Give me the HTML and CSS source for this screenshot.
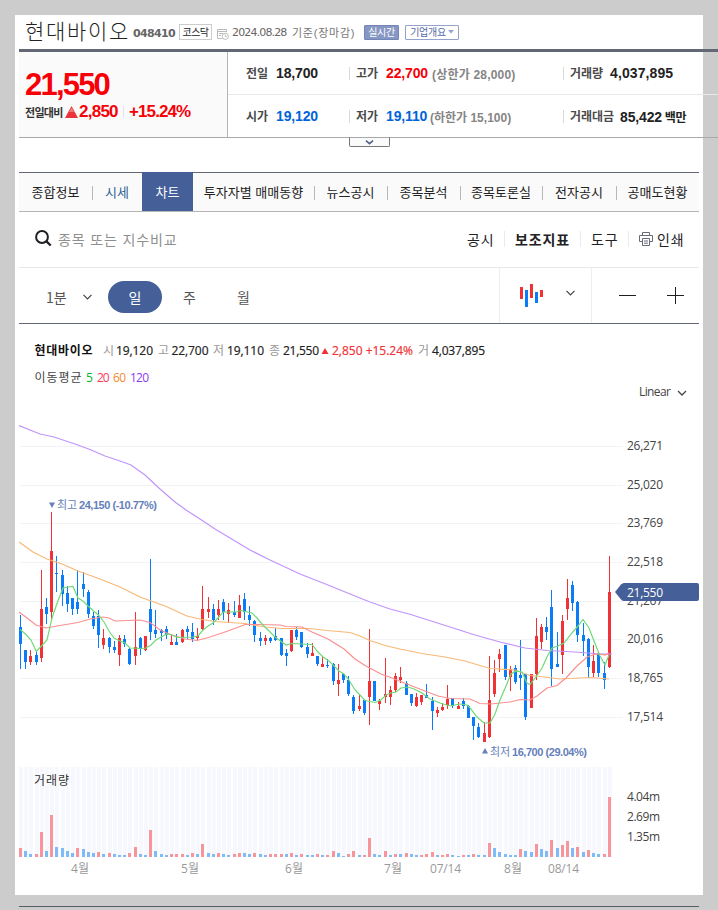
FILE: index.html
```html
<!DOCTYPE html>
<html lang="ko">
<head>
    <meta charset="UTF-8">
    <meta name="viewport" content="width=device-width, initial-scale=1.0">
    <title>현대바이오</title>
    <link rel="stylesheet" href="styles.css">
</head>
<body>
    <div id="panel">
        <div id="header">
            <h1>현대바이오</h1>
            <span class="code">048410</span>
            <span class="market">코스닥</span>
            <svg class="date-icon" width="12" height="12" viewBox="0 0 12 12" fill="none" stroke="#bbb">
                <path d="M5 10.5H.5v-9h9V4M.5 3.5h9M2 5.5h4M2 7.5h2"/>
                <circle cx="8.3" cy="8.3" r="3.1"/>
                <path d="M8.3 6.5v2h1.5"/>
            </svg>
            <span class="date">2024.08.28</span>
            <span class="basis">기준(장마감)</span>
            <span class="live">실시간</span>
            <span class="summary">기업개요<svg width="6" height="4" viewBox="0 0 6 4"><path d="M0 0h6L3 3.5z" fill="#94a3cf"/></svg></span>
        </div>

        <div id="quote">
            <div class="today">
                <strong class="price">21,550</strong>
                <div class="change">
                    <span class="label">전일대비</span>
                    <svg width="13" height="12" viewBox="0 0 13 12"><path d="M6.5 0L13 12H0z" fill="#e8343a"/><path d="M6.5 1.5L9 6H4z" fill="#f6777a"/></svg>
                    <span class="diff">2,850</span>
                    <span class="percent">+15.24%</span>
                </div>
            </div>
            <div class="rows">
                <div class="row">
                    <span class="name">전일</span><b>18,700</b>
                    <span class="name bar">고가</span><b class="up">22,700</b><span class="limit">(상한가 28,000)</span>
                    <span class="name bar">거래량</span><b class="volume">4,037,895</b>
                </div>
                <div class="row">
                    <span class="name">시가</span><b class="down">19,120</b>
                    <span class="name bar">저가</span><b class="down">19,110</b><span class="limit low">(하한가 15,100)</span>
                    <span class="name bar">거래대금</span><b class="amount">85,422 <i>백만</i></b>
                </div>
            </div>
            <div class="more"><svg width="9" height="5" viewBox="0 0 9 5" fill="none" stroke="#4f6285" stroke-width="1.6"><path d="M1 .7l3.500 3 3.500-3"/></svg></div>
        </div>

        <div id="tabs">
            <a class="line">종합정보</a>
            <a class="sise">시세</a>
            <a class="active">차트</a>
            <a class="line">투자자별 매매동향</a>
            <a class="line">뉴스공시</a>
            <a class="line">종목분석</a>
            <a class="line">종목토론실</a>
            <a class="line">전자공시</a>
            <a>공매도현황</a>
        </div>

        <div id="search">
            <svg width="17" height="17" viewBox="0 0 17 17" fill="none" stroke="#1e1e23" stroke-width="2"><circle cx="7" cy="7" r="5.900"/><path d="M11.200 11.200l4.500 4.300" stroke-width="2.300"/></svg>
            <span class="placeholder">종목 또는 지수비교</span>
            <span class="menu gongsi">공시</span>
            <span class="menu bold">보조지표</span>
            <span class="menu tool">도구</span>
            <span class="menu print"><svg width="14" height="14" viewBox="0 0 14 14" fill="none" stroke="#666b78"><path d="M3.500 3.500v-3h7v3M3.500 9.500h-3v-6h13v6h-3M3.500 6.500h7v7h-7zM5 9h4M5 11.200h4"/></svg>인쇄</span>
        </div>

        <div id="period">
            <span class="minute">1분<svg width="9" height="6" viewBox="0 0 9 6" fill="none" stroke="#444" stroke-width="1.200"><path d="M.5.8l4 4 4-4"/></svg></span>
            <span class="day">일</span>
            <span class="week">주</span>
            <span class="month">월</span>
            <span class="type">
                <svg width="24" height="24" viewBox="0 0 24 24">
                    <path d="M0 3h3v12H0zM10 0h3v14h-3zM20 6h3v7h-3z" fill="#f03236"/>
                    <path d="M5 6h3v17H5zM15 8h3v11h-3z" fill="#0a7cf8"/>
                </svg>
                <svg width="9" height="6" viewBox="0 0 9 6" fill="none" stroke="#444" stroke-width="1.200"><path d="M.5.8l4 4 4-4"/></svg>
            </span>
            <span class="scale">
                <svg width="17" height="17" viewBox="0 0 17 17" stroke="#1e1e23"><path d="M0 8.500h17"/></svg>
                <svg width="17" height="17" viewBox="0 0 17 17" stroke="#1e1e23"><path d="M0 8.500h17M8.500 0v17"/></svg>
            </span>
        </div>

        <svg id="chart" width="680" height="571" viewBox="19 324 680 571">
            <g class="legend">
                <text x="34.500" y="355" textLength="58" class="stock">현대바이오</text>
                <text x="103" y="355" class="gray">시</text><text x="116" y="355" textLength="37">19,120</text>
                <text x="158" y="355" class="gray">고</text><text x="171.500" y="355" textLength="37">22,700</text>
                <text x="213" y="355" class="gray">저</text><text x="227" y="355" textLength="37">19,110</text>
                <text x="269" y="355" class="gray">종</text><text x="283" y="355" textLength="36">21,550</text>
                <path d="M325 348l3.500 6h-7z" fill="#f03236"/>
                <text x="332" y="355" textLength="81" class="rise">2,850 +15.24%</text>
                <text x="418" y="355" class="gray">거</text><text x="432" y="355" textLength="53">4,037,895</text>
            </g>
            <g class="average">
                <text x="34.500" y="382" textLength="47">이동평균</text>
                <text x="86" y="382" fill="#00b92f">5</text>
                <text x="97" y="382" textLength="12.500" fill="#f9395c">20</text>
                <text x="113" y="382" textLength="13" fill="#f58a2c">60</text>
                <text x="130" y="382" textLength="19" fill="#8a3df5">120</text>
            </g>
            <text x="639" y="396" textLength="32" class="linear">Linear</text>
            <path d="M678 391l4 4 4-4" fill="none" stroke="#444" stroke-width="1.300"/>
            <g id="grid"></g>
            <g id="candles"></g>
            <g id="averages"></g>
            <g id="volumes"></g>
            <g class="note">
                <path d="M49 502.500h6l-3 5.500z"/>
                <text x="57" y="509" class="ko" textLength="20">최고</text><text x="79" y="509" textLength="78">24,150 (-10.77%)</text>
                <path d="M482 753.500h6l-3-5.500z"/>
                <text x="490" y="756" class="ko" textLength="20">최저</text><text x="512" y="756" textLength="75">16,700 (29.04%)</text>
            </g>
            <path d="M615 592l6-7.500q1.500-1.500 3-1.500h73q2 0 2 2v14q0 2-2 2h-73q-1.500 0-3-1.500z" fill="#455f99"/>
            <text x="627" y="597" textLength="36" class="current">21,550</text>
            <text x="34" y="785" textLength="35" class="volume-title">거래량</text>
        </svg>
    </div>
    <div id="footer-line"></div>

    <script>
        const NS = "http://www.w3.org/2000/svg";
        const first = 20.5, step = 5.21;

        // color, high, body top, body bottom, low, volume color, volume height
        const days = [
            "b 615 627 644 669 r 9", "b 650 650 662 669 b 6", "r 650 656 662 665 b 3", "b 651 655 662 665 r 3", "r 570 609 658 662 r 25",
            "b 598 607 614 624 b 6", "r 512 551 612 620 r 42", "b 556 573 574 592 b 10", "b 570 575 594 606 b 9", "b 586 593 604 612 b 6",
            "b 598 598 609 615 b 4", "b 570 602 609 614 r 9", "b 572 584 589 597 b 8", "b 590 592 614 618 b 5", "b 612 616 626 629 b 4",
            "b 610 616 635 648 r 5", "r 629 638 645 649 b 3", "b 637 638 647 653 r 4", "b 641 647 650 653 b 3", "r 635 638 655 666 b 2",
            "b 635 639 644 647 b 2", "b 647 649 664 665 r 4", "r 612 647 656 665 r 10", "b 637 638 649 655 b 3", "r 636 636 650 651 b 2",
            "b 559 609 632 640 r 27", "b 610 630 634 638 b 6", "b 629 630 633 641 b 3", "b 626 629 635 639 b 2", "r 634 642 645 645 r 3",
            "b 634 642 645 645 r 3", "r 629 630 642 643 r 3", "b 626 629 632 639 b 2", "b 623 632 639 642 r 4", "r 628 636 638 640 b 3",
            "r 586 609 629 631 r 13", "r 597 609 612 618 b 4", "b 604 609 620 625 b 3", "r 600 609 615 620 r 4", "b 599 602 612 620 b 3",
            "r 603 610 614 622 b 2", "b 601 612 615 617 r 3", "r 595 605 618 618 r 4", "b 593 599 612 620 b 4", "b 606 615 620 626 b 3",
            "b 620 621 635 642 r 4", "b 632 638 641 646 b 3", "r 635 638 641 645 b 2", "b 637 638 641 643 r 3", "b 628 636 640 641 r 3",
            "b 638 638 655 656 r 3", "b 649 653 656 666 b 3", "r 630 630 651 652 r 4", "b 627 630 637 640 b 2", "b 632 632 647 648 r 3",
            "b 643 647 654 658 b 2", "r 643 653 656 656 b 2", "b 656 656 664 666 r 3", "r 656 664 667 667 b 2", "b 659 665 666 668 r 2",
            "b 663 664 681 685 r 6", "r 664 680 684 696 b 4", "b 674 674 680 683 b 1", "b 676 680 694 696 r 3", "b 695 697 711 714 r 6",
            "r 695 706 709 711 b 2", "b 700 700 713 715 r 2", "r 629 681 697 725 r 19", "b 681 681 701 701 b 3", "r 699 701 704 710 b 2",
            "r 658 694 697 703 r 6", "r 686 690 697 705 b 2", "r 673 676 690 692 r 3", "r 667 677 680 683 b 3", "b 681 683 695 695 r 4",
            "b 694 694 703 706 b 3", "r 693 697 706 707 b 2", "r 695 695 702 705 r 2", "b 684 695 698 698 r 3", "b 697 701 711 730 r 5",
            "r 707 710 713 717 b 2", "r 703 707 710 711 r 2", "r 685 699 705 709 r 3", "b 698 698 706 708 b 2", "r 702 706 709 709 b 1",
            "b 698 701 706 709 r 2", "b 705 706 718 718 b 2", "b 717 717 726 740 r 3", "b 723 727 737 738 b 2", "r 722 733 742 742 b 2",
            "r 656 700 737 738 r 14", "r 660 673 694 697 b 9", "r 649 654 659 672 b 5", "b 645 645 677 680 b 3", "r 666 669 677 691 b 2",
            "b 665 668 682 684 b 2", "b 640 675 678 690 r 8", "b 674 674 717 720 b 6", "r 674 674 708 708 b 5", "r 618 636 674 680 r 13",
            "r 624 627 642 649 b 8", "b 617 627 632 640 b 6", "b 590 607 669 686 r 17", "b 632 664 667 667 b 9", "r 615 621 655 674 r 12",
            "r 579 598 609 620 r 16", "b 581 585 603 611 b 9", "b 601 602 635 642 r 10", "b 623 635 641 656 b 5", "b 638 639 667 678 r 7",
            "r 645 661 673 677 b 4", "b 653 653 673 677 b 3", "b 662 673 680 689 r 3", "r 556 592 667 668 r 60"
        ];

        const averages = [
            { color: "#c294fb", points: "19,425.5 40,434 54,437 75,444 90,449.5 105,456 120,461 131,465 145,475 160,489 175,502 186,510 200,519 215,529 235,541 250,550 270,560 300,574 328,585 350,594 370,602 390,609 409,614 428,620 450,627 475,635 500,642 525,648 547,650.5 575,652 600,654 612,654" },
            { color: "#f9b877", points: "19,542 33,552 47,559 62,564 78,571 100,579 120,587 140,597 165,606 187,616 202,619.5 215,621.5 245,623.5 265,627 282,628.5 310,628.5 327,630.5 350,632.5 360,636 370,640.5 385,645.5 400,649 422,653.5 445,657 465,661 490,668.5 515,670 530,675.5 545,677 560,679 590,677.5 609,679" },
            { color: "#fb8f8f", points: "19,612 27,618 36,625 46,628 57,626 78,622.5 90,619 103,617 109,618 115,621 140,620 150,622.5 160,630 172,635 185,639 197,640.5 210,637 228,631 245,624.5 256,624.5 280,625 286,626.5 302,627 312,632 328,639 344,649 355,659 365,665.5 381,674 392,678 402,682 412,686 425,691 438,696 450,698.5 470,699 480,703.5 491,704 500,703 510,702 520,699.5 530,700 537,696 547,688 557,685.5 566,678 576,667 587,657 594,654.5 600,654 605,655 609,653" },
            { color: "#70d977", points: "20,629.5 25.5,634 31,640 36.3,651.5 41.5,646 47,640 52,618 57.5,602 63,588 68,587 73,586.5 78,598 83,601 88,606 93,610.5 98.5,615 104,622 109,631 114,638 120,641 125,643 130,648 145,648.5 151,645 156,640 161,637 167,634 172,635 177,637.5 193,637 198,636 203,630 208,626 213,623 218,618 223,612 236,612 241,610.5 252,613 257,618 262,624 267,629 275,637 286,645 292,643.5 312,644.5 318,652 323,657 329,661 334,666 339,671 344,674 349,680 355,690 360,695 365,700.5 375,702.5 381,700 386,695 391,693 396,692 401,688 408,687 414,689 422,693 430,699 440,703 450,706 460,704 467,705 470,708 477,717 484,723 490,723 495,714 500,700 506,686 511,674 516,671 522,672 527,683 530,684.5 536,677 542,668 547,657 552,648 558,646 564,643 572,633 578,626 583,619.5 589,628 594,641 600,656 605,665 609,655" }
        ];

        function add(parent, tag, attrs, text) {
            let el = document.createElementNS(NS, tag);
            for (let key in attrs) el.setAttribute(key, attrs[key]);
            if (text) el.textContent = text;
            document.getElementById(parent).appendChild(el);
        }

        function rect(parent, x, y, width, height, fill) {
            add(parent, "rect", { x, y, width, height, fill });
        }

        // price lines with their labels
        [[446, "26,271"], [485, "25,020"], [523, "23,769"], [562, "22,518"], [601, "21,267"],
         [639, "20,016"], [678, "18,765"], [717, "17,514"]].forEach(([y, label]) => {
            rect("grid", 20, y, 603, 1, "#f1f3f6");
            add("grid", "text", { x: 627, y: y + 4, textLength: 36, class: "axis" }, label);
        });
        [[801, "4.04m"], [821, "2.69m"], [841, "1.35m"]].forEach(([y, label]) => {
            add("grid", "text", { x: 627, y, textLength: 33, class: "axis" }, label);
        });
        [[71, "4월", 18], [181, "5월", 18], [285, "6월", 18], [384, "7월", 18], [430, "07/14", 31],
         [504, "8월", 18], [548, "08/14", 31]].forEach(([x, label, textLength]) => {
            add("grid", "text", { x, y: 873, textLength, class: "month-label" }, label);
        });

        days.forEach((day, i) => {
            let [color, high, top, bottom, low, volumeColor, volume] = day.split(" ");
            let x = Math.floor(first + i * step);
            let fill = color === "r" ? "#f03236" : "#0a7cf8";
            rect("candles", x, high, 1, low - high, fill);
            rect("candles", x - 1, top, 3, bottom - top, fill);
            rect("volumes", x - 1, 767, 4, 90, "#f6f8fd");
            rect("volumes", x - 1, 857 - volume, 3, volume, volumeColor === "r" ? "#f6969b" : "#80bbf9");
        });

        averages.forEach(line => {
            add("averages", "polyline", { points: line.points, stroke: line.color });
        });
    </script>
</body>
</html>
```
FILE: styles.css
```css
* {
    box-sizing: border-box;
}
body {
    margin: 0;
    padding-top: 15px;
    height: 910px;
    overflow: hidden;
    background: #ccc;
    font-family: "Liberation Sans", "Noto Sans CJK KR", sans-serif;
    color: #222;
}
#panel {
    width: 688px;
    height: 880px;
    margin-left: 15px;
    padding-left: 4px;
    background: #fff;
}
#header {
    display: flex;
    align-items: center;
    height: 34px;
    padding-left: 6px;
    white-space: nowrap;
    font-size: 12px;
}
h1 {
    width: 108px;
    height: 34px;
    margin: 0;
    font-family: "Noto Sans CJK KR", sans-serif;
    font-size: 21px;
    font-weight: 300;
    letter-spacing: 1.7px;
    line-height: 30px;
}
.code {
    width: 46px;
    padding-top: 3px;
    font: bold 11px "DejaVu Sans", sans-serif;
    letter-spacing: -0.65px;
    color: #666;
}
.market {
    width: 33px;
    height: 16px;
    border: 1px solid #ccc;
    font-size: 10px;
    line-height: 15px;
    text-align: center;
    letter-spacing: -0.6px;
}
.date-icon {
    margin: 4px 3px 0 5px;
}
.date {
    width: 60px;
    font: 11px "DejaVu Sans", sans-serif;
    letter-spacing: -0.85px;
    color: #666;
}
.basis {
    width: 72px;
    font-size: 11px;
    letter-spacing: 0.75px;
    color: #777;
}
.live, .summary {
    height: 15px;
    border: 1px solid #7384b8;
    border-radius: 1px;
    font-size: 10px;
    line-height: 14px;
    letter-spacing: -0.3px;
    text-align: center;
}
.live {
    width: 35px;
    background: #8797c4;
    color: #fff;
}
.summary {
    width: 54px;
    margin-left: 6px;
    border-color: #93a2cc;
    color: #5569a5;
}
.summary svg {
    margin: 0 0 2px 2px;
}
#quote {
    position: relative;
    display: flex;
    width: 699px;
    height: 89px;
    border-top: 3px solid #636875;
    border-bottom: 1px solid #a8a9ab;
    background: linear-gradient(to right, transparent 684px, #ccc 684px);
}
.today {
    width: 209px;
    padding: 16px 0 0 6px;
    border-right: 1px solid #b5b5b5;
    background: #fafafa;
}
.price {
    display: block;
    font-size: 31px;
    line-height: 34px;
    letter-spacing: -1.8px;
    color: #f70008;
}
.change {
    display: flex;
    align-items: center;
    height: 18px;
    margin-top: 1px;
    font-weight: bold;
    white-space: nowrap;
}
.change .label {
    width: 40px;
    font-size: 11px;
    letter-spacing: -0.7px;
    color: #333;
}
.diff, .percent {
    font-size: 17px;
    letter-spacing: -0.75px;
    color: #f70008;
}
.diff {
    width: 45px;
    padding-left: 1px;
}
.percent {
    padding-left: 5px;
    border-left: 1px solid #e1e5ea;
    letter-spacing: -0.9px;
    line-height: 12px;
}
.rows {
    flex: 1;
}
.row {
    display: grid;
    grid-template-columns: 30px 73px 37px 46px 131px 41px 1fr;
    align-items: center;
    height: 43px;
    padding-left: 18px;
    white-space: nowrap;
    font-size: 14px;
}
.row:first-child {
    border-bottom: 1px solid #e8e8e8;
}
.row:last-child {
    height: 42px;
}
.name {
    padding-top: 1px;
    font-size: 12px;
    font-weight: bold;
    color: #4a4a4a;
    line-height: 14px;
}
.bar {
    padding: 1px 0 0 6px;
    border-left: 1px solid #d9d9d9;
    line-height: 12px;
}
.row b {
    letter-spacing: -0.15px;
}
.up {
    color: #f70008;
}
.down {
    color: #0064d8;
}
.limit {
    font-size: 12px;
    letter-spacing: 0.2px;
    color: #858585;
    font-weight: bold;
}
.limit.low {
    margin-left: -2px;
    letter-spacing: 0;
}
.volume {
    padding-left: 6px;
}
.row .volume {
    letter-spacing: 0.1px;
}
.amount {
    padding-left: 16px;
}
.row i {
    margin-left: -1px;
    font-size: 12px;
    font-style: normal;
}
.more {
    position: absolute;
    left: 330px;
    top: 85px;
    width: 41px;
    height: 10px;
    border: 1px solid #777;
    border-top-color: #a8a9ab;
    border-radius: 0 0 2px 2px;
    background: #fafafa;
    line-height: 7px;
    text-align: center;
}
.more svg {
    display: block;
    margin: 2px auto 0;
}
#tabs {
    display: grid;
    grid-template-columns: 73px 50px 51px 121px 73px 73px 82px 74px 83px;
    width: 680px;
    height: 40px;
    margin-top: 34px;
    border-top: 1px solid #636875;
    border-bottom: 1px solid #b5b5b5;
    background: #fafafa;
    font: 13px/37px "Noto Sans CJK KR", sans-serif;
    text-align: center;
    white-space: nowrap;
}
#tabs a {
    position: relative;
}
.line::after {
    content: "";
    position: absolute;
    right: -1px;
    top: 13px;
    width: 1px;
    height: 14px;
    background: #b8b8b8;
}
#tabs .sise {
    color: #2f5f93;
}
#tabs .active {
    height: 39px;
    margin-top: -1px;
    padding-top: 1px;
    background: #455f99;
    color: #fff;
}
#search {
    display: flex;
    align-items: center;
    width: 680px;
    height: 56px;
    padding: 0 0 2px 16px;
    border-bottom: 1px solid #e8e9eb;
    font: 14px/16px "Noto Sans CJK KR", sans-serif;
    white-space: nowrap;
}
.placeholder {
    width: 410px;
    padding-left: 6px;
    letter-spacing: 0.85px;
    color: #8f8f8f;
}
.menu {
    display: flex;
    align-items: center;
}
.menu + .menu {
    padding-left: 10px;
    border-left: 1px solid #e9ebf0;
}
.gongsi {
    width: 42px;
    padding-left: 5px;
}
.menu.bold {
    width: 76px;
    font-weight: bold;
    letter-spacing: 0.9px;
}
.gongsi, .tool, .print {
    letter-spacing: 0.9px;
}
.tool {
    width: 48px;
}
.print svg {
    margin-right: 4px;
}
#period {
    display: flex;
    align-items: center;
    width: 680px;
    height: 56px;
    border-bottom: 1px solid #636875;
    font: 14px/16px "Noto Sans CJK KR", sans-serif;
    color: #555;
}
.minute {
    display: flex;
    align-items: center;
    justify-content: space-between;
    width: 73px;
    padding: 2px 0 0 27px;
}
.day {
    width: 54px;
    height: 32px;
    margin: 3px 0 0 16px;
    border-radius: 16px;
    background: #455f99;
    color: #fff;
    line-height: 32px;
    text-align: center;
}
.week {
    width: 54px;
    padding: 2px 0 0 21px;
}
.month {
    padding: 2px 0 0 21px;
}
.type {
    display: flex;
    justify-content: space-between;
    width: 93px;
    height: 55px;
    margin-left: auto;
    padding: 16px 16px 0 20px;
    border: solid #eceef1;
    border-width: 0 1px;
}
.type svg:last-child {
    margin-top: 6px;
}
.scale {
    display: flex;
    justify-content: space-between;
    width: 107px;
    padding: 0 15px 0 27px;
}
#chart {
    display: block;
    font-family: "Open Sans", "Noto Sans CJK KR", sans-serif;
    font-size: 12px;
}
.legend {
    font-weight: 500;
    fill: #222;
}
.legend text:not(.gray):not(.stock) {
    stroke: #222;
    stroke-width: 0.2px;
}
.legend .stock {
    font-weight: bold;
    fill: #111;
}
.legend .gray {
    font-weight: normal;
    fill: #999;
}
.legend text.rise:not(.gray):not(.stock) {
    fill: #f03236;
    stroke: #f03236;
}
.average {
    fill: #444;
}
.linear, .axis {
    fill: #444;
}
.month-label {
    fill: #999;
}
#averages {
    fill: none;
    stroke-width: 1.2;
}
.note {
    font: bold 11px "Liberation Sans", sans-serif;
    fill: #6580bb;
}
.note .ko {
    font: 11px "Noto Sans CJK KR", sans-serif;
}
.current {
    fill: #fff;
    font-weight: 500;
}
.volume-title {
    fill: #333;
}
#footer-line {
    width: 680px;
    height: 1px;
    margin: 11px 0 0 19px;
    background: #555c68;
}
```
